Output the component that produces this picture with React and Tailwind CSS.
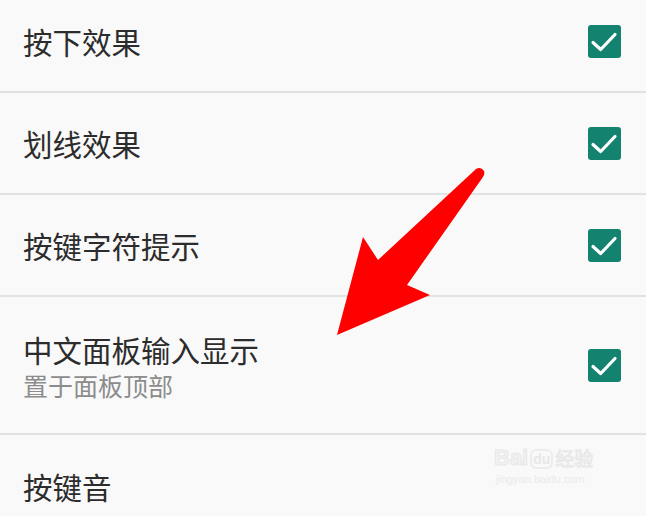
import React from "react";

function Check() {
  return (
    <div className="w-[33px] h-[33px] rounded-[3px] bg-[#13836f] flex items-center justify-center shrink-0">
      <svg width="33" height="33" viewBox="0 0 33 33">
        <path d="M5 17.5 L12.7 24.5 L27 9.5" fill="none" stroke="#fff" strokeWidth="3.2" strokeLinecap="round" strokeLinejoin="round" />
      </svg>
    </div>
  );
}

function Row({ title, sub, h, check = true, border = true }) {
  return (
    <div className={`flex items-center justify-between pl-[23px] pr-[25px] ${h} ${border ? "border-b-2 border-[#e2e2e2]" : ""}`}>
      <div className="flex flex-col">
        <div className="text-[29.5px] leading-[36px] text-[#2c2c2c]">{title}</div>
        {sub && <div className="text-[25px] leading-[30px] text-[#8c8c8c] mt-[3px]">{sub}</div>}
      </div>
      {check && <Check />}
    </div>
  );
}

export default function App() {
  return (
    <div
      className="relative w-[646px] h-[516px] overflow-hidden bg-[#f9f9f9]"
      style={{ fontFamily: '"Noto Sans CJK SC", "Noto Sans", sans-serif' }}
    >
      <div className="flex flex-col -mt-[9px]">
        <Row title="按下效果" h="h-[102px]" />
        <Row title="划线效果" h="h-[102px]" />
        <Row title="按键字符提示" h="h-[102px]" />
        <Row title="中文面板输入显示" sub="置于面板顶部" h="h-[138px]" />
        <Row title="按键音" h="h-[102px]" check={false} border={false} />
      </div>

      <svg className="absolute left-0 top-0 pointer-events-none" width="646" height="516" viewBox="0 0 646 516">
        <path
          d="M476 169 Q481 166 484 171 Q485 174 483 177 L407 285 L430 295 L337 335 L363 237 L378 260 Z"
          fill="#ff0000"
        />
      </svg>

      <div className="absolute left-[494px] top-[447px] flex flex-col items-start pointer-events-none select-none">
        <div className="flex items-end gap-[2px]">
          <span className="text-[22px] leading-[22px] font-bold text-[#f2f2f2]" style={{ fontFamily: '"Liberation Sans", sans-serif', WebkitTextStroke: "1px #e8e8e8" }}>Bai</span>
          <span className="relative text-[14px] leading-[16px] font-bold text-[#e8e8e8] border-2 border-[#ececec] rounded-[6px] px-[1px]" style={{ fontFamily: '"Liberation Sans", sans-serif' }}>du</span>
          <span className="text-[19px] leading-[22px] text-[#f2f2f2]" style={{ WebkitTextStroke: "1px #e8e8e8" }}>经验</span>
        </div>
        <div className="text-[11px] leading-[14px] mt-[3px] text-[#eaeaea] ml-[2px]" style={{ fontFamily: '"Liberation Sans", sans-serif' }}>jingyan.baidu.com</div>
      </div>
    </div>
  );
}
